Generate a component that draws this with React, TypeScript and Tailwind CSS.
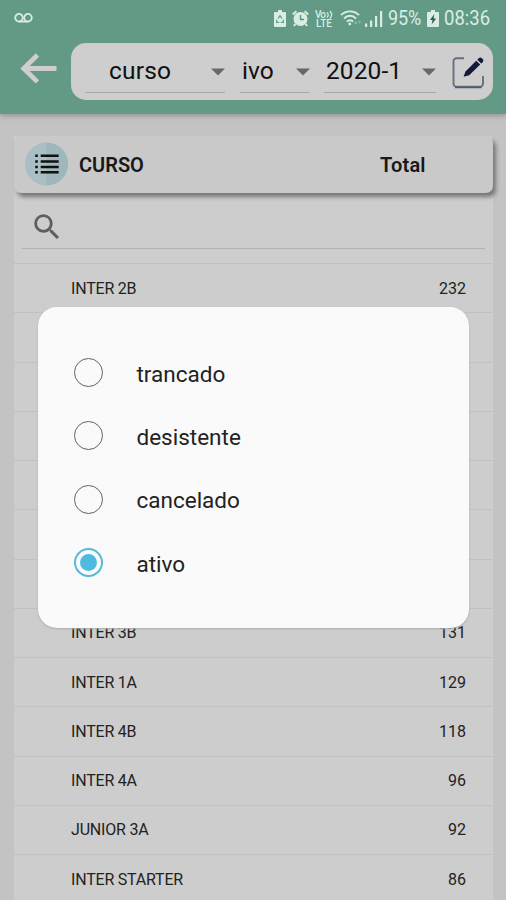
type Row = { name: string; total: number | null };

const rows: Row[] = [
  { name: "INTER 2B", total: 232 },
  { name: "", total: null },
  { name: "", total: null },
  { name: "", total: null },
  { name: "", total: null },
  { name: "", total: null },
  { name: "", total: null },
  { name: "INTER 3B", total: 131 },
  { name: "INTER 1A", total: 129 },
  { name: "INTER 4B", total: 118 },
  { name: "INTER 4A", total: 96 },
  { name: "JUNIOR 3A", total: 92 },
  { name: "INTER STARTER", total: 86 },
];

const options = ["trancado", "desistente", "cancelado", "ativo"];

function StatusBar() {
  return (
    <div className="flex h-[37px] items-center pr-[15px] pl-[14px] text-[#d8eee5]">
      <svg className="-mt-[2px] h-[10px] w-[19px]" viewBox="0 0 19 10" fill="none" stroke="currentColor" strokeWidth="1.8">
        <circle cx="5" cy="4.7" r="3.8" />
        <circle cx="14" cy="4.7" r="3.8" />
        <path d="M5 8.6h9" />
      </svg>
      <svg className="ml-auto h-[17px] w-[12px]" viewBox="0 0 12 17">
        <path d="M4 0h4v2h3a1 1 0 0 1 1 1v13a1 1 0 0 1-1 1H1a1 1 0 0 1-1-1V3a1 1 0 0 1 1-1h3z" fill="currentColor" />
        <path d="M4 8.5 6 5.7l2 2.8M2.8 9.8v2.7h2.4M9.2 9.8v2.7H6.8" fill="none" stroke="#5c9480" strokeWidth="1.2" />
      </svg>
      <svg className="ml-[6px] h-[17px] w-[17px]" viewBox="0 0 17 17">
        <circle cx="8.5" cy="9" r="7" fill="currentColor" />
        <path d="M.8 4.4 4.4 1.2M16.2 4.4l-3.6-3.2M3.4 14l-1.6 2M13.6 14l1.6 2" stroke="currentColor" strokeWidth="2" />
        <path d="M8.5 5v4.5h3.5" fill="none" stroke="#5c9480" strokeWidth="1.4" />
      </svg>
      <svg className="ml-[6px] h-[18px] w-[18px] text-[10px] font-medium" viewBox="0 0 18 18" fill="currentColor">
        <text x="0" y="8" textLength="11">Vo</text>
        <path d="M12 2.3c1.5 1.6 1.5 3.6 0 5.2M14.8 1c2.2 2.3 2.2 5.4 0 7.6" fill="none" stroke="currentColor" strokeWidth="1.2" />
        <text x="1" y="17.3" textLength="16">LTE</text>
      </svg>
      <svg className="ml-[7px] h-[17px] w-[22px]" viewBox="0 0 22 17" fill="none" stroke="currentColor">
        <path d="M1 5.2c5-5.1 13-5.1 18 0M4 8.5c3.6-3.6 8.6-3.6 12 0M6.8 11.6c2-1.9 4.6-1.9 6.4 0" strokeWidth="1.9" />
        <circle cx="9.8" cy="14" r="1.4" fill="currentColor" stroke="none" />
        <path d="m14 14 1.8-3 1.8 3zM18 11l1.7 3 1.7-3z" fill="currentColor" stroke="none" opacity=".35" />
      </svg>
      <svg className="ml-[3px] h-[17px] w-[18px]" viewBox="0 0 18 17" fill="currentColor">
        <path d="M0 13.5h2.2V17H0zM5 10.5h2.2V17H5zM10 6h2.2v11H10zM15 1h2.2v16H15z" />
      </svg>
      <span className="ml-[5px] w-[34px] origin-left scale-x-[0.86] text-[21px] leading-none tracking-[-0.2px]">95%</span>
      <svg className="ml-[5px] h-[17px] w-[12px]" viewBox="0 0 12 17">
        <path d="M4 0h4v2h3a1 1 0 0 1 1 1v13a1 1 0 0 1-1 1H1a1 1 0 0 1-1-1V3a1 1 0 0 1 1-1h3z" fill="currentColor" />
        <path d="M7.4 4 3 10h2.6l-1 4.4L9.2 8.4H6.5z" fill="#30594a" />
      </svg>
      <span className="ml-[5px] w-[47px] origin-left scale-x-[0.88] text-[21px] leading-none">08:36</span>
    </div>
  );
}

function Caret() {
  return (
    <svg className="mt-[2px] h-[8px] w-[14px] shrink-0" viewBox="0 0 14 8">
      <path d="M0 .5h14L7 7.5z" fill="#686868" />
    </svg>
  );
}

function Toolbar() {
  return (
    <div className="flex h-[77px] pt-[6px]">
      <div className="w-[71px] pt-[9px] pl-[20px]">
        <svg className="h-[32px] w-[38px]" viewBox="0 0 38 32" fill="none" stroke="#cecece" strokeWidth="4.8">
          <path d="M36.5 16.5H4M17.5 3 3.7 16.5l13.8 13.4" />
        </svg>
      </div>
      <div className="flex h-[57px] w-[422px] rounded-[15px] bg-[#cecece] pl-[14px] text-[24.5px] leading-[28px] text-[#111]">
        <div className="flex h-[50px] w-[140px] items-center border-b border-[#a8a8a8] pt-[7px] pl-[24px]">
          <span className="flex-1 tracking-[0.2px]">curso</span>
          <Caret />
        </div>
        <div className="ml-[15px] flex h-[50px] w-[70px] items-center border-b border-[#a8a8a8] pt-[7px] pl-[2px]">
          <span className="flex-1 tracking-[0.1px]">ivo</span>
          <Caret />
        </div>
        <div className="ml-[14px] flex h-[50px] w-[112px] items-center border-b border-[#a8a8a8] pt-[7px] pl-[2px]">
          <span className="flex-1 tracking-[0.1px]">2020-1</span>
          <Caret />
        </div>
        <svg className="mt-[12px] ml-[15px] h-[36px] w-[35px]" viewBox="0 0 35 36">
          <path d="M13 3.3H5.5a3 3 0 0 0-3 3v22.5a3 3 0 0 0 3 3H29a3 3 0 0 0 3-3V21" fill="none" stroke="#667080" strokeWidth="1.9" />
          <path d="M4 32.5h26.5" stroke="#4d596b" strokeWidth="1.5" />
          <path d="m12.6 21.8 1.9-5.4L25.2 5.7l4 3.8-11 10.7z" fill="#141b38" />
          <path d="m26.3 4.7 1.4-1.4a2.2 2.2 0 0 1 3.2 0l.8.8a2.2 2.2 0 0 1 0 3.1l-1.5 1.4z" fill="#141b38" />
        </svg>
      </div>
    </div>
  );
}

function TableHeader() {
  return (
    <div className="relative flex h-[57px] items-center rounded-[7px] bg-[#c9c9c9] pl-[11px] text-[20px] font-semibold text-[#181818] shadow-[3px_4px_4px_#777]">
      <svg className="-mt-px h-[44px] w-[44px]" viewBox="0 0 44 44">
        <circle cx="21.5" cy="22" r="21.5" fill="#a9bfc3" />
        <path d="M21.5 .5a21.5 21.5 0 0 1 0 43z" fill="#9db7bc" />
        <path d="M15.7 13.8h18M15.7 19.4h18M15.7 24.9h18M15.7 30.3h18" stroke="#111" strokeWidth="2.5" />
        <path d="M10.2 13.8h2.6M10.2 19.4h2.6M10.2 24.9h2.6M10.2 30.3h2.6" stroke="#111" strokeWidth="2.5" />
      </svg>
      <span className="ml-[10px] w-[301px]">CURSO</span>
      <span className="tracking-[0.2px]">Total</span>
    </div>
  );
}

function SearchField() {
  return (
    <div className="h-[70px] px-[8px]">
      <div className="flex h-[56px] items-center border-b border-[#b2b2b2] pt-[12px] pl-[8px]">
        <svg className="h-[34px] w-[34px]" viewBox="0 0 24 24" fill="#5e5e5e">
          <path d="M15.5 14h-.79l-.28-.27A6.47 6.47 0 0 0 16 9.5 6.5 6.5 0 1 0 9.5 16c1.61 0 3.09-.59 4.23-1.57l.27.28v.79l5 4.99L20.49 19zm-6 0C7.01 14 5 11.99 5 9.5S7.01 5 9.5 5 14 7.01 14 9.5 11.99 14 9.5 14" />
        </svg>
      </div>
    </div>
  );
}

function StatusDialog({ selected }: { selected: string }) {
  return (
    <div className="absolute top-[307px] left-[38px] h-[321px] w-[431px] rounded-[19px] bg-[#fafafa] pt-[34px] pl-[36px] shadow-[0_1px_2px_#aaa]">
      {options.map((option) => (
        <div key={option} className="flex h-[63.3px] items-center">
          {option === selected ? (
            <div className="flex h-[29px] w-[29px] items-center justify-center rounded-full border-2 border-[#58b9d8]">
              <div className="h-[17px] w-[17px] rounded-full bg-[#4dbbdf]" />
            </div>
          ) : (
            <div className="h-[29px] w-[29px] rounded-full border-[1.5px] border-[#626262]" />
          )}
          <span className="ml-[33.5px] pt-[2px] text-[22.5px] leading-[28px] text-[#222]">{option}</span>
        </div>
      ))}
    </div>
  );
}

export default function App() {
  return (
    <div className="relative h-[900px] w-[506px] overflow-hidden bg-[#c3c3c3] font-['Roboto',sans-serif]">
      <header className="relative h-[114px] bg-[#629a85] shadow-[0_2px_5px_#989090]">
        <StatusBar />
        <Toolbar />
      </header>
      <main className="mt-[22px] ml-[14px] w-[479px] bg-[#cdcdcd]">
        <TableHeader />
        <SearchField />
        {rows.map((row, i) => (
          <div
            key={i}
            className="flex h-[49.25px] items-center justify-between border-t border-[#c1c1c1] pt-px pr-[27px] pl-[57px] text-[16px] text-[#222]"
          >
            <span className="tracking-[-0.2px]">{row.name}</span>
            <span>{row.total}</span>
          </div>
        ))}
      </main>
      <StatusDialog selected="ativo" />
    </div>
  );
}
